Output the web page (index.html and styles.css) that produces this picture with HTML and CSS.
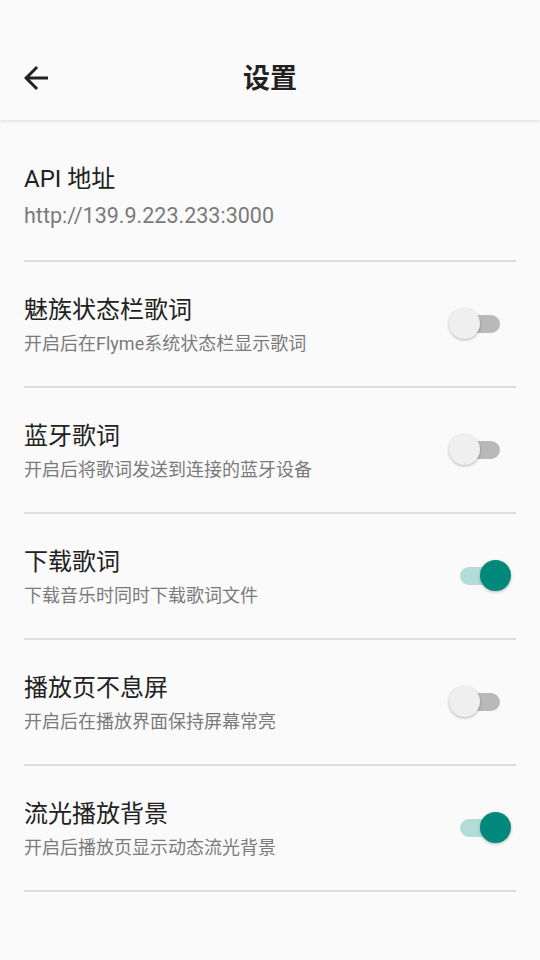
FILE: index.html
```html
<!DOCTYPE html>
<html lang="zh-CN">
<head>
<meta charset="utf-8">
<title>设置</title>
<link rel="stylesheet" href="styles.css">
</head>
<body>
<div class="app">
  <header class="topbar">
    <button class="back" aria-label="返回">
      <svg viewBox="0 0 24 24" width="36" height="36"><path d="M20 11H7.83l5.59-5.59L12 4l-8 8 8 8 1.41-1.41L7.83 13H20v-2z" fill="#212121"/></svg>
    </button>
    <h1 class="title">设置</h1>
  </header>
  <main class="list">
    <div class="item item-api">
      <div class="text">
        <div class="item-title">API 地址</div>
        <div class="item-sub">http://139.9.223.233:3000</div>
      </div>
    </div>
    <div class="item">
      <div class="text">
        <div class="item-title">魅族状态栏歌词</div>
        <div class="item-sub">开启后在Flyme系统状态栏显示歌词</div>
      </div>
      <div class="switch"><span class="track"></span><span class="thumb"></span></div>
    </div>
    <div class="item">
      <div class="text">
        <div class="item-title">蓝牙歌词</div>
        <div class="item-sub">开启后将歌词发送到连接的蓝牙设备</div>
      </div>
      <div class="switch"><span class="track"></span><span class="thumb"></span></div>
    </div>
    <div class="item">
      <div class="text">
        <div class="item-title">下载歌词</div>
        <div class="item-sub">下载音乐时同时下载歌词文件</div>
      </div>
      <div class="switch on"><span class="track"></span><span class="thumb"></span></div>
    </div>
    <div class="item">
      <div class="text">
        <div class="item-title">播放页不息屏</div>
        <div class="item-sub">开启后在播放界面保持屏幕常亮</div>
      </div>
      <div class="switch"><span class="track"></span><span class="thumb"></span></div>
    </div>
    <div class="item">
      <div class="text">
        <div class="item-title">流光播放背景</div>
        <div class="item-sub">开启后播放页显示动态流光背景</div>
      </div>
      <div class="switch on"><span class="track"></span><span class="thumb"></span></div>
    </div>
  </main>
</div>
</body>
</html>
```
FILE: styles.css
```css
html, body {
  margin: 0;
  padding: 0;
  background: #fafafa;
}
body {
  font-family: Roboto, "Noto Sans CJK SC", sans-serif;
  color: #212121;
}
.app {
  width: 540px;
  min-height: 960px;
}
.topbar {
  height: 120px;
  display: flex;
  align-items: center;
  justify-content: center;
  position: relative;
  background: #fafafa;
  box-shadow: 0 1px 4px rgba(0, 0, 0, 0.12);
}
.back {
  position: absolute;
  left: 18px;
  top: 60px;
  width: 36px;
  height: 36px;
  padding: 0;
  border: 0;
  background: none;
  display: flex;
}
.title {
  margin: 34px 0 0;
  font-size: 27px;
  font-weight: 700;
  font-family: "Noto Sans CJK SC", sans-serif;
  color: #212121;
  line-height: 36px;
}
.list {
  padding: 0 24px;
}
.item {
  display: flex;
  align-items: center;
  padding: 31px 0 29px;
  border-bottom: 2px solid #dcdcdc;
}
.item-api {
  padding: 42px 0 30px;
}
.text {
  flex: 1;
  min-width: 0;
}
.item-title {
  font-size: 24px;
  line-height: 34px;
  color: #212121;
}
.item-sub {
  margin-top: 4px;
  font-size: 18px;
  line-height: 26px;
  color: #7a7a7a;
}
.item-api .item-sub {
  margin-top: 6px;
  font-size: 21.5px;
  line-height: 28px;
}
.switch {
  position: relative;
  width: 62px;
  height: 32px;
  margin: 0 5px 3px 0;
  flex: none;
}
.track {
  position: absolute;
  left: 11px;
  top: 7px;
  width: 40px;
  height: 18px;
  border-radius: 9px;
  background: #b9b9b9;
}
.thumb {
  position: absolute;
  left: 0;
  top: 0;
  width: 31px;
  height: 31px;
  border-radius: 50%;
  background: #efefef;
  box-shadow: 0 1px 3px rgba(0, 0, 0, 0.28);
}
.switch.on .track {
  background: #b3dcd8;
}
.switch.on .thumb {
  left: 31px;
  background: #00897b;
}
```
